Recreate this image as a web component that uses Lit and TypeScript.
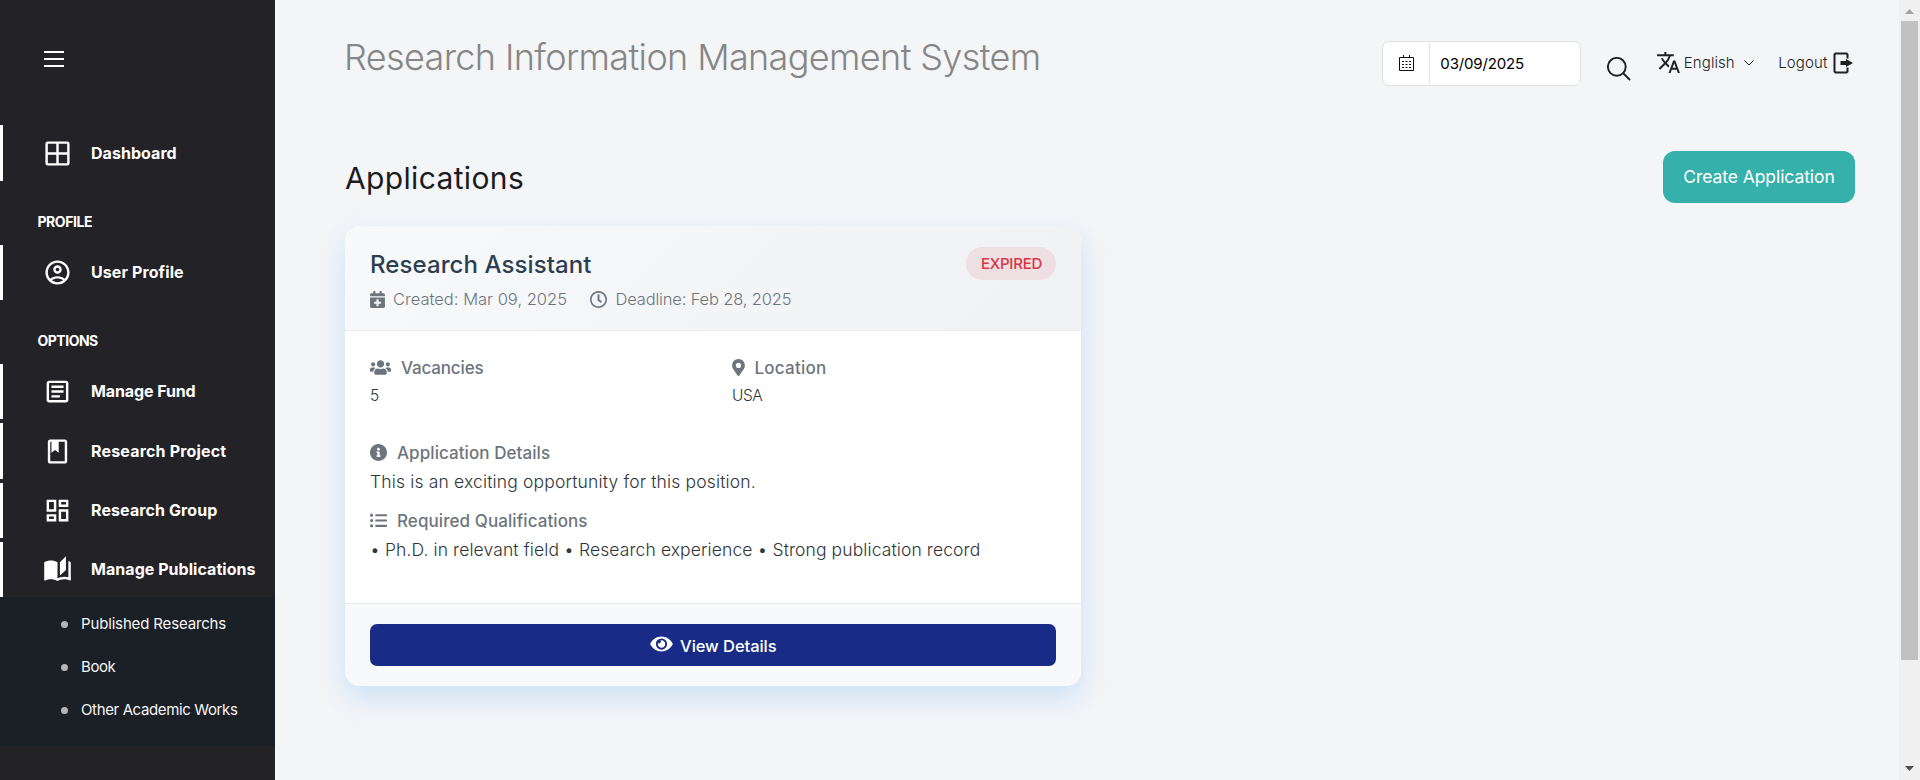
import { LitElement, html, css, svg } from "lit";
import { customElement } from "lit/decorators.js";

const ICONS = {
  windows: svg`<path d="M4 2h16a2 2 0 0 1 2 2v16a2 2 0 0 1-2 2H4a2 2 0 0 1-2-2V4a2 2 0 0 1 2-2zm0 2v7h7V4zm9 0v7h7V4zm-9 9v7h7v-7zm9 0v7h7v-7z" fill-rule="evenodd"/>`,
  account: svg`<path d="M12 2C6.48 2 2 6.48 2 12s4.48 10 10 10 10-4.48 10-10S17.52 2 12 2zM7.35 18.5C8.66 17.56 10.26 17 12 17s3.34.56 4.65 1.5C15.34 19.44 13.74 20 12 20s-3.34-.56-4.65-1.5zm10.79-1.38C16.45 15.8 14.32 15 12 15s-4.45.8-6.14 2.12C4.7 15.73 4 13.95 4 12c0-4.42 3.58-8 8-8s8 3.58 8 8c0 1.95-.7 3.73-1.86 5.12zM12 6c-1.93 0-3.5 1.57-3.5 3.5S10.07 13 12 13s3.5-1.57 3.5-3.5S13.93 6 12 6zm0 5c-.83 0-1.5-.67-1.5-1.5S11.17 8 12 8s1.5.67 1.5 1.5S12.83 11 12 11z"/>`,
  article: svg`<path d="M19 5v14H5V5h14m0-2H5c-1.1 0-2 .9-2 2v14c0 1.1.9 2 2 2h14c1.1 0 2-.9 2-2V5c0-1.1-.9-2-2-2zM14 17H7v-2h7v2zm3-4H7v-2h10v2zm0-4H7V7h10v2z"/>`,
  bookmark: svg`<path d="M18 2H6c-1.1 0-2 .9-2 2v16c0 1.1.9 2 2 2h12c1.1 0 2-.9 2-2V4c0-1.1-.9-2-2-2zm0 18H6V4h1v9l3-2.25L13 13V4h5v16z"/>`,
  dashboard: svg`<path d="M19 5v2h-4V5h4M9 5v6H5V5h4m10 8v6h-4v-6h4M9 17v2H5v-2h4M21 3h-8v6h8V3zM11 3H3v10h8V3zm10 8h-8v10h8V11zm-10 4H3v6h8v-6z"/>`,
  book: svg`<path d="M19 1l-5 5v11l5-4.5V1zm2 4v13.5c-1.1-.35-2.3-.5-3.5-.5-1.7 0-4.15.65-5.5 1.5V6c-1.45-1.1-3.55-1.5-5.5-1.5S2.45 4.9 1 6v14.65c0 .25.25.5.5.5.1 0 .15-.05.25-.05C3.1 20.45 5.05 20 6.5 20c1.95 0 4.05.4 5.5 1.5 1.35-.85 3.8-1.5 5.5-1.5 1.65 0 3.35.3 4.75 1.05.1.05.15.05.25.05.25 0 .5-.25.5-.5V6c-.6-.45-1.25-.75-2-1z"/>`,
};

const nav = (icon: keyof typeof ICONS, label: string, cls: string) => html`
  <a class="item ${cls}"><svg class="nav-icon" viewBox="0 0 24 24">${ICONS[icon]}</svg><span>${label}</span></a>`;

@customElement("side-nav")
class SideNav extends LitElement {
  static styles = css`
    :host { display: block; width: 275px; height: 780px; background: #232227; color: #fff; overflow: hidden; }
    .top { height: 74px; padding: 51px 0 0 44px; }
    .burger { display: block; width: 20px; height: 16px; }
    .item { display: flex; align-items: center; height: 55px; box-sizing: border-box; border-left: 3px solid #fff; padding-left: 40px; font-size: 16px; font-weight: 700; white-space: nowrap; }
    .item span { margin-left: 19px; line-height: 24px; padding-bottom: 1px; }
    .nav-icon { width: 29px; height: 29px; fill: #fff; flex: none; }
    .tall { height: 56px; }
    .dash { letter-spacing: .046px; }
    .user { letter-spacing: .1px; }
    .fund { letter-spacing: -.105px; margin-bottom: 4px; }
    .project { letter-spacing: .176px; margin-bottom: 4px; }
    .group { letter-spacing: .102px; margin-bottom: 4px; }
    .pubs { letter-spacing: .045px; }
    .item.tall span { padding: 0; }
    .section { padding: 18px 0 0 37.5px; line-height: 46px; font-size: 14px; font-weight: 700; letter-spacing: -.45px; }
    .section.options { letter-spacing: -.5px; }
    .sub { background: #1b1f26; height: 144px; padding: 5px 0 0; }
    .sub a { display: flex; align-items: center; height: 43px; padding-left: 61px; font-size: 15px; color: #f4f5f6; white-space: nowrap; }
    .sub a::before { content: ""; width: 7px; height: 7px; border-radius: 50%; background: #b5b5b7; margin: 2px 13px 0 0; flex: none; }
    .p1 { letter-spacing: -.155px; }
    .p2 { letter-spacing: -.4px; }
    .p3 { letter-spacing: -.37px; }
  `;
  render() {
    return html`
      <div class="top"><svg class="burger" viewBox="0 0 20 16"><path d="M0 1h20M0 8h20M0 15h20" stroke="#fff" stroke-width="1.8"/></svg></div>
      ${nav("windows", "Dashboard", "tall dash")}
      <div class="section">PROFILE</div>
      ${nav("account", "User Profile", "user")}
      <div class="section options">OPTIONS</div>
      ${nav("article", "Manage Fund", "fund")}
      ${nav("bookmark", "Research Project", "tall project")}
      ${nav("dashboard", "Research Group", "group")}
      ${nav("book", "Manage Publications", "pubs")}
      <div class="sub"><a class="p1">Published Researchs</a><a class="p2">Book</a><a class="p3">Other Academic Works</a></div>`;
  }
}

@customElement("application-card")
class ApplicationCard extends LitElement {
  static styles = css`
    :host { display: block; width: 736px; height: 460px; border-radius: 15px; background: #fff; overflow: hidden; box-shadow: 0 12px 28px rgba(0, 123, 255, .16); color: #6c757d; }
    svg { fill: currentColor; flex: none; }
    .head { box-sizing: border-box; height: 105px; padding: 21px 25px 0; border-bottom: 1px solid #ebecec; background: linear-gradient(135deg, #f8f9fb, #f0f1f3); display: flex; justify-content: space-between; }
    .title { font-size: 24px; font-weight: 500; line-height: 36px; letter-spacing: .09px; color: #2c3e50; }
    .meta { display: flex; align-items: center; height: 33px; font-size: 16.5px; font-weight: 300; }
    .meta svg { height: 17px; }
    .meta span { padding-bottom: 2px; }
    .cal { width: 15px; margin-right: 8px; }
    .clock { width: 17px; margin: 0 8px 0 23.5px; }
    .created { letter-spacing: .01px; }
    .deadline { letter-spacing: -.16px; }
    .badge { width: 90px; height: 33px; border-radius: 17px; background: #eedfe2; color: #dc3545; font-size: 15px; font-weight: 500; line-height: 33px; letter-spacing: -.25px; text-align: center; text-indent: 1px; }
    .body { height: 272px; padding: 0 25px; box-sizing: border-box; }
    .cols { display: grid; grid-template-columns: 362px 1fr; padding-top: 23px; height: 85px; }
    .label { display: flex; align-items: center; height: 27px; font-size: 17px; font-weight: 500; }
    .users { width: 21px; height: 17px; margin-right: 10px; }
    .pin { width: 13px; height: 17px; margin-right: 9.5px; }
    .round { width: 17px; height: 17px; margin-right: 10px; }
    .vac { letter-spacing: -.16px; }
    .loc { letter-spacing: .22px; }
    .det { letter-spacing: .07px; }
    .req { letter-spacing: .08px; }
    .small { font-size: 15.5px; line-height: 28px; padding-top: 1px; font-weight: 300; color: #2f353a; letter-spacing: -.5px; }
    .text { font-size: 17.5px; line-height: 30px; font-weight: 300; color: #2f353a; letter-spacing: .155px; margin-bottom: 10px; padding-top: 1px; }
    .list { letter-spacing: .1px; white-space: nowrap; }
    .foot { box-sizing: border-box; height: 83px; padding: 20px 25px; background: #f8f9fb; border-top: 1px solid #e9eaeb; }
    .view { display: flex; align-items: center; justify-content: center; height: 42px; box-sizing: border-box; border-radius: 7px; background: #182c87; color: #fff; font-size: 16.5px; font-weight: 500; letter-spacing: -.06px; }
    .eye { width: 23px; height: 20px; margin: 0 7.5px 2px 0; }
    .view span { padding-top: 2px; }
  `;
  render() {
    return html`
      <div class="head">
        <div>
          <div class="title">Research Assistant</div>
          <div class="meta">
            <svg class="cal" viewBox="0 0 448 512"><path d="M436 160H12c-6.6 0-12-5.4-12-12v-36c0-26.5 21.5-48 48-48h48V12c0-6.6 5.4-12 12-12h40c6.6 0 12 5.4 12 12v52h128V12c0-6.6 5.4-12 12-12h40c6.6 0 12 5.4 12 12v52h48c26.5 0 48 21.5 48 48v36c0 6.6-5.4 12-12 12zM12 192h424c6.6 0 12 5.4 12 12v260c0 26.5-21.5 48-48 48H48c-26.5 0-48-21.5-48-48V204c0-6.6 5.4-12 12-12zm316 140c0-6.6-5.4-12-12-12h-60v-60c0-6.6-5.4-12-12-12h-40c-6.6 0-12 5.4-12 12v60h-60c-6.6 0-12 5.4-12 12v40c0 6.6 5.4 12 12 12h60v60c0 6.6 5.4 12 12 12h40c6.6 0 12-5.4 12-12v-60h60c6.6 0 12-5.4 12-12v-40z"/></svg>
            <span class="created">Created: Mar 09, 2025</span>
            <svg class="clock" viewBox="8 8 496 496"><path d="M256 8C119 8 8 119 8 256s111 248 248 248 248-111 248-248S393 8 256 8zm0 448c-110.500 0-200-89.500-200-200S145.500 56 256 56s200 89.500 200 200-89.500 200-200 200zm61.800-104.400l-84.900-61.700c-3.100-2.300-4.900-5.900-4.900-9.700V116c0-6.600 5.400-12 12-12h32c6.600 0 12 5.400 12 12v141.700l66.800 48.600c5.400 3.900 6.500 11.400 2.600 16.800L334.600 349c-3.900 5.300-11.400 6.500-16.800 2.600z"/></svg>
            <span class="deadline">Deadline: Feb 28, 2025</span>
          </div>
        </div>
        <div class="badge">EXPIRED</div>
      </div>
      <div class="body">
        <div class="cols">
          <div>
            <div class="label vac"><svg class="users" viewBox="0 0 640 512"><path d="M96 224c35.300 0 64-28.700 64-64s-28.700-64-64-64-64 28.700-64 64 28.700 64 64 64zm448 0c35.300 0 64-28.700 64-64s-28.700-64-64-64-64 28.700-64 64 28.700 64 64 64zm32 32h-64c-17.600 0-33.500 7.100-45.100 18.600 40.300 22.100 68.900 62 75.100 109.400h66c17.700 0 32-14.300 32-32v-32c0-35.300-28.700-64-64-64zm-256 0c61.900 0 112-50.100 112-112S381.900 32 320 32 208 82.100 208 144s50.100 112 112 112zm76.800 32h-8.300c-20.800 10-43.900 16-68.500 16s-47.600-6-68.500-16h-8.300C179.600 288 128 339.600 128 403.200V432c0 26.500 21.500 48 48 48h288c26.500 0 48-21.500 48-48v-28.800c0-63.600-51.600-115.200-115.200-115.200zm-223.700-13.400C161.500 263.100 145.600 256 128 256H64c-35.300 0-64 28.700-64 64v32c0 17.700 14.300 32 32 32h65.900c6.300-47.400 34.900-87.300 75.200-109.400z"/></svg>Vacancies</div>
            <div class="small">5</div>
          </div>
          <div>
            <div class="label loc"><svg class="pin" viewBox="0 0 384 512"><path d="M172.268 501.670C26.970 291.031 0 269.413 0 192 0 85.961 85.961 0 192 0s192 85.961 192 192c0 77.413-26.970 99.031-172.268 309.670-9.535 13.774-29.930 13.773-39.464 0zM192 272c44.183 0 80-35.817 80-80s-35.817-80-80-80-80 35.817-80 80 35.817 80 80 80z"/></svg>Location</div>
            <div class="small">USA</div>
          </div>
        </div>
        <div class="label det"><svg class="round" viewBox="8 8 496 496"><path d="M256 8C119.043 8 8 119.083 8 256c0 136.997 111.043 248 248 248s248-111.003 248-248C504 119.083 392.957 8 256 8zm0 110c23.196 0 42 18.804 42 42s-18.804 42-42 42-42-18.804-42-42 18.804-42 42-42zm56 254c0 6.627-5.373 12-12 12h-88c-6.627 0-12-5.373-12-12v-24c0-6.627 5.373-12 12-12h12v-64h-12c-6.627 0-12-5.373-12-12v-24c0-6.627 5.373-12 12-12h64c6.627 0 12 5.373 12 12v100h12c6.627 0 12 5.373 12 12v24z"/></svg>Application Details</div>
        <div class="text">This is an exciting opportunity for this position.</div>
        <div class="label req"><svg class="round" viewBox="0 0 512 512"><path d="M48 48a48 48 0 1 0 48 48 48 48 0 0 0-48-48zm0 160a48 48 0 1 0 48 48 48 48 0 0 0-48-48zm0 160a48 48 0 1 0 48 48 48 48 0 0 0-48-48zm448 16H176a16 16 0 0 0-16 16v32a16 16 0 0 0 16 16h320a16 16 0 0 0 16-16v-32a16 16 0 0 0-16-16zm0-320H176a16 16 0 0 0-16 16v32a16 16 0 0 0 16 16h320a16 16 0 0 0 16-16V80a16 16 0 0 0-16-16zm0 160H176a16 16 0 0 0-16 16v32a16 16 0 0 0 16 16h320a16 16 0 0 0 16-16v-32a16 16 0 0 0-16-16z"/></svg>Required Qualifications</div>
        <div class="text list">• Ph.D. in relevant field • Research experience • Strong publication record</div>
      </div>
      <div class="foot">
        <div class="view"><svg class="eye" viewBox="0 0 576 512"><path d="M572.520 241.400C518.290 135.590 410.930 64 288 64S57.680 135.640 3.480 241.410a32.350 32.350 0 0 0 0 29.190C57.710 376.410 165.070 448 288 448s230.320-71.640 284.520-177.410a32.350 32.350 0 0 0 0-29.190zM288 400a144 144 0 1 1 144-144 143.930 143.930 0 0 1-144 144zm0-240a95.310 95.310 0 0 0-25.310 3.790 47.850 47.850 0 0 1-66.900 66.900A95.780 95.780 0 1 0 288 160z"/></svg><span>View Details</span></div>
      </div>`;
  }
}

@customElement("app-root")
class AppRoot extends LitElement {
  static styles = css`
    :host { display: flex; width: 1920px; height: 780px; overflow: hidden; background: #f3f5f7; font-family: Inter, "Open Sans", sans-serif; color: #212123; }
    side-nav { flex: none; }
    main { flex: 1; padding: 0 44px 0 70px; }
    header { display: flex; align-items: flex-start; height: 151px; }
    h1 { margin: 35px auto 0 -1px; font-size: 36px; font-weight: 300; line-height: 45px; letter-spacing: -.63px; color: #868686; white-space: nowrap; }
    .date { display: flex; align-items: center; box-sizing: border-box; width: 199px; height: 45px; margin-top: 41px; border: 1px solid #dfe0e2; border-radius: 7px; background: #fff; color: #000; font-size: 15px; letter-spacing: -.15px; }
    .cal { box-sizing: border-box; width: 47px; height: 41px; padding: 12px 0 0 16px; border-right: 1px solid #dfe0e2; margin-right: 10px; }
    .cal svg { display: block; width: 16px; height: 16px; }
    .search { width: 24px; height: 24px; margin: 57px 0 0 25.5px; }
    .link { display: flex; align-items: center; height: 25px; margin-top: 50px; font-size: 15px; font-weight: 300; }
    .lang { margin-left: 25px; letter-spacing: .08px; }
    .translate { width: 25px; height: 25px; margin-right: 3px; }
    .chev { width: 10px; height: 6px; margin: 1px 0 0 9px; }
    .out { margin: 50px 2px 0 24.5px; letter-spacing: .1px; }
    .exit { width: 20px; height: 22px; margin-left: 5.5px; }
    .row { display: flex; justify-content: space-between; height: 75px; }
    h2 { margin: 5px 0 0 0; font-size: 30px; font-weight: 400; line-height: 45px; letter-spacing: .35px; color: #1c1c1f; }
    .create { width: 192px; height: 52px; border-radius: 12px; background: #35b0ab; color: #fff; font-size: 17.5px; line-height: 52px; text-align: center; letter-spacing: -.08px; }
    .scroll { width: 21px; background: #f0f0f0; display: flex; flex-direction: column; align-items: center; }
    .scroll svg { width: 9px; height: 5px; margin: 9px 0 7px; }
    .scroll svg:last-child { margin: auto 0 9px; }
    .thumb { width: 17px; height: 639px; background: #c1c1c1; }
  `;
  render() {
    return html`
      <side-nav></side-nav>
      <main>
        <header>
          <h1>Research Information Management System</h1>
          <div class="date">
            <div class="cal"><svg viewBox="0 0 16 16"><path d="M.5 2.500h14v13H.5zM4.500 0v3M10.500 0v3" fill="none" stroke="#111"/><path d="M3 6.500h2M6.500 6.500h2M10 6.500h2M3 9.500h2M6.500 9.500h2M10 9.500h2M3 12.500h2M6.500 12.500h2M10 12.500h2" stroke="#111" stroke-width="1.200"/></svg></div>
            <span>03/09/2025</span>
          </div>
          <svg class="search" viewBox="0 0 24 24" fill="none" stroke="#212123" stroke-width="1.900"><circle cx="9.800" cy="9.800" r="8.900"/><path d="M16 16l7 7"/></svg>
          <div class="link lang">
            <svg class="translate" viewBox="0 0 24 24" fill="#212123"><path d="M12.870 15.070l-2.540-2.510.03-.03A17.520 17.520 0 0 0 14.070 6H17V4h-7V2H8v2H1v1.990h11.170C11.500 7.920 10.440 9.750 9 11.350 8.070 10.320 7.300 9.190 6.690 8h-2c.73 1.630 1.730 3.170 2.980 4.560l-5.090 5.020L4 19l5-5 3.110 3.110.76-2.040zM18.500 10h-2L12 22h2l1.120-3h4.750L21 22h2l-4.500-12zm-2.620 7l1.620-4.330L19.120 17h-3.240z"/></svg>
            <span>English</span>
            <svg class="chev" viewBox="0 0 10 6"><path d="M.5.500L5 5 9.500.500" fill="none" stroke="#212123"/></svg>
          </div>
          <div class="link out"><span>Logout</span>
            <svg class="exit" viewBox="0 0 20 22"><path d="M14.500 6.500V2.500L13.500 1.500H2.500L1.500 2.500v17l1 1h11l1-1v-4" fill="none" stroke="#212123" stroke-width="2"/><path d="M7.500 9h5.500V7L20 11l-7 4V13H7.500z" fill="#212123"/></svg>
          </div>
        </header>
        <div class="row"><h2>Applications</h2><div class="create">Create Application</div></div>
        <application-card></application-card>
      </main>
      <div class="scroll">
        <svg viewBox="0 0 9 5"><path d="M4.500 0L9 5H0z" fill="#a3a3a3"/></svg>
        <div class="thumb"></div>
        <svg viewBox="0 0 9 5"><path d="M0 0h9L4.500 5z" fill="#505050"/></svg>
      </div>`;
  }
}
